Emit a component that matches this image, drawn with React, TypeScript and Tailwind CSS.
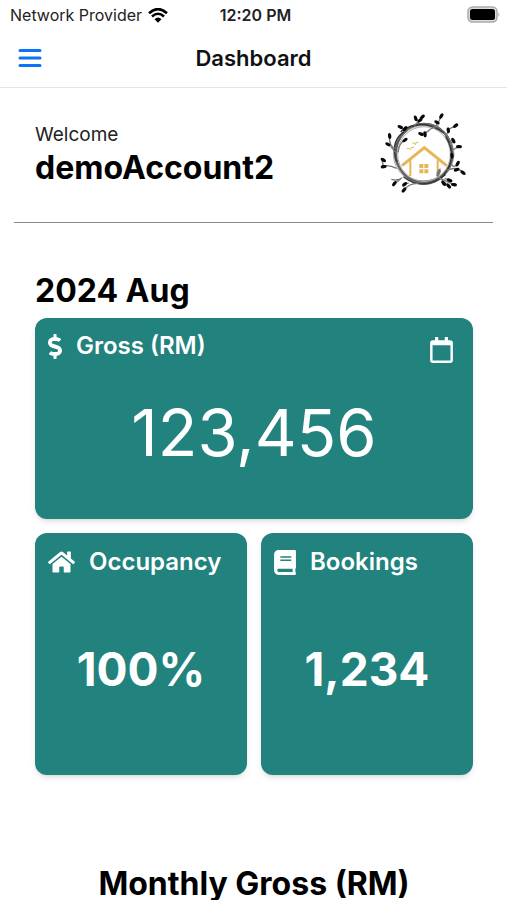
import type { ReactNode } from "react";
import { FaBook, FaDollarSign, FaHome, FaRegCalendar } from "react-icons/fa";

type Stat = { label: string; value: string; icon: ReactNode };

const STATS: Stat[] = [
  { label: "Occupancy", value: "100%", icon: <FaHome className="h-6 w-[27px]" /> },
  { label: "Bookings", value: "1,234", icon: <FaBook className="h-[25px] w-[22px]" /> },
];

// x, y, rotation of every leaf round the wreath
const LEAVES = [
  [137, 40, 70], [157, 36, -40], [150, 46, -40], [214, 33, -60], [201, 52, 30],
  [91, 66, 25], [105, 71, -50], [59, 93, 85], [54, 118, 30], [105, 105, -35],
  [40, 165, 30], [41, 185, -10], [165, 88, 85], [153, 87, 25], [235, 76, 80],
  [257, 62, -35], [250, 107, 60], [267, 125, 5], [263, 176, -60], [260, 194, -20],
  [279, 203, 35], [239, 226, 20], [252, 239, 10], [236, 243, 50], [221, 235, 50],
  [104, 238, -40], [73, 236, -55], [102, 255, -50], [246, 152, 85],
];

function WreathLogo() {
  return (
    <svg viewBox="24 18 270 252" className="h-[84px] w-[90px]" role="img" aria-label="House in a wreath">
      <g fill="none" stroke="#444">
        <ellipse cx="162" cy="145" rx="85" ry="88" strokeWidth="7" stroke="#555" />
        <ellipse cx="160" cy="142" rx="88" ry="86" strokeWidth="3" stroke="#777" />
        <ellipse cx="164" cy="147" rx="85" ry="91" strokeWidth="3" stroke="#666" />
        <ellipse cx="161" cy="148" rx="91" ry="86" strokeWidth="2" stroke="#888" />
        <ellipse cx="162" cy="147" rx="79" ry="82" strokeWidth="3" stroke="#aaa" />
        <path d="M80 170Q58 105 108 77M92 80Q155 35 221 84M227 94Q265 158 219 212M100 215Q160 262 226 209" strokeWidth="4" stroke="#333" />
      </g>
      <g fill="none" stroke="#777" strokeWidth="4">
        <path d="M132 62L145 50L137 38M145 50L157 36M195 66L207 48L214 33M108 83L94 70M78 130Q58 128 58 95M80 145L62 125" />
        <path d="M80 190Q58 179 40 183L36 165M96 218Q86 229 64 223M92 222L73 236M145 235Q118 234 102 255M116 234L97 238" />
        <path d="M230 88L238 72L257 62M247 135L267 125M240 120L250 107M244 178Q254 191 263 176M230 196Q260 182 279 203" />
        <path d="M206 218Q224 227 252 239M224 220L240 226M215 225L236 243M206 62Q170 72 165 92M177 78L153 87M84 142Q88 113 105 105" />
      </g>
      <g fill="#080808">
        {LEAVES.map(([x, y, r]) => (
          <ellipse key={`${x}-${y}`} cx={x} cy={y} rx="9" ry="5" transform={`rotate(${r} ${x} ${y})`} />
        ))}
      </g>
      <g fill="none" stroke="#e5b653">
        <path d="M96 182L163 128L230 182" strokeWidth="9" />
        <path d="M121 166V213M203 166V213" strokeWidth="6" />
        <path d="M110 131Q118 127 121 134Q125 122 132 128M127 114Q134 111 136 119Q138 108 145 112" strokeWidth="3" />
      </g>
      <path d="M148 177h12v12h-12zM163 177h12v12h-12zM148 193h12v12h-12zM163 193h12v12h-12z" fill="#e5b653" />
      <path d="M199 213Q198 197 211 190Q216 204 203 216" fill="#777" />
    </svg>
  );
}

function StatusBar() {
  return (
    <div className="grid h-[30px] grid-cols-3 items-center pr-[6px] pl-[10px] text-base text-[#222]">
      <div className="flex items-center gap-[6px] whitespace-nowrap">
        <span>Network Provider</span>
        <svg viewBox="0 0 20 15" className="h-[15px] w-5 shrink-0" aria-hidden="true">
          <path d="M1 5.2Q10-3 19 5.2M4 8.5Q10 3 16 8.5" fill="none" stroke="#000" strokeWidth="2.6" />
          <path d="M6.5 11.2Q10 8 13.5 11.2L10 14.8z" fill="#000" />
        </svg>
      </div>
      <span className="text-center font-semibold">12:20 PM</span>
      <svg viewBox="0 0 34 18" className="h-[18px] w-[34px] justify-self-end" aria-label="Battery full">
        <rect x="1" y="1" width="29" height="15" rx="4.5" fill="#ddd" stroke="#aaa" strokeWidth="1.5" />
        <rect x="3" y="3" width="25" height="11" rx="2.5" fill="#000" />
        <path d="M31.5 6.5Q33.5 8.5 31.5 10.5z" fill="#aaa" />
      </svg>
    </div>
  );
}

function StatCard({ label, value, icon }: Stat) {
  return (
    <section className="flex h-[242px] flex-col rounded-xl bg-[#21827e] px-[13px] pt-[13px] text-white shadow-md">
      <h3 className="flex h-8 items-center gap-[14px] text-2xl font-semibold">
        {icon}
        {label}
      </h3>
      <p className="pt-[61px] text-center text-[46px] leading-[60px] font-bold">{value}</p>
    </section>
  );
}

export default function App() {
  return (
    <div className="flex h-screen flex-col bg-white font-['Inter',sans-serif] text-black">
      <header className="shrink-0 border-b border-[#e4e4e4]">
        <StatusBar />
        <div className="grid h-[57px] grid-cols-[1fr_auto_1fr] items-center px-[18px]">
          <button type="button" aria-label="Open menu" className="w-fit">
            <svg viewBox="0 0 24 20" className="h-5 w-6">
              <path d="M2 1.5H22M2 9H22M2 16.5H22" stroke="#0b73f5" strokeWidth="3" strokeLinecap="round" />
            </svg>
          </button>
          <h1 className="text-[22px] font-semibold text-[#111]">Dashboard</h1>
        </div>
      </header>

      <main className="min-h-0 flex-1 overflow-y-auto [scrollbar-width:none]">
        <div className="mx-[14px] flex h-[135px] items-start justify-between border-b border-[#888] pt-[23px] pr-[25px] pl-[21px]">
          <div className="pt-3">
            <p className="text-[19px] leading-6 text-[#222]">Welcome</p>
            <h2 className="text-[32px] leading-[42px] font-bold">demoAccount2</h2>
          </div>
          <WreathLogo />
        </div>

        <div className="pt-12 pr-[34px] pl-[35px]">
          <h2 className="pb-[7px] text-[32px] leading-10 font-bold">2024 Aug</h2>
          <section className="h-[201px] rounded-xl bg-[#21827e] px-[13px] pt-3 text-white shadow-md">
            <div className="flex items-start justify-between">
              <h3 className="flex h-8 items-center gap-[14px] text-2xl font-semibold">
                <FaDollarSign className="h-[25px] w-[14px]" />
                Gross (RM)
              </h3>
              <button type="button" aria-label="Pick month" className="pt-[7px] pr-[7px]">
                <FaRegCalendar className="h-[26px] w-[23px]" />
              </button>
            </div>
            <p className="pt-[30px] text-center text-[65px] leading-[80px] font-normal">123,456</p>
          </section>
          <div className="grid grid-cols-2 gap-[14px] pt-[14px]">
            {STATS.map((s) => (
              <StatCard key={s.label} {...s} />
            ))}
          </div>
          <h2 className="pt-[89px] pb-10 text-center text-[32px] leading-10 font-bold">Monthly Gross (RM)</h2>
        </div>
      </main>
    </div>
  );
}
